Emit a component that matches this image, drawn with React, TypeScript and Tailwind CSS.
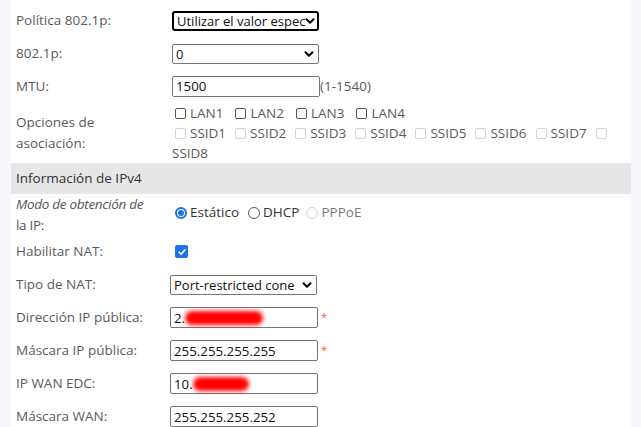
import React from 'react';

const FONT = { fontFamily: '"Open Sans", "Noto Sans", Arial, sans-serif' };

function Chevron() {
  return (
    <svg className="w-[10px] h-[10px] shrink-0 text-black" viewBox="0 0 10 10" fill="none" stroke="currentColor">
      <path d="M1.5 3.2 5 6.7 8.5 3.2" strokeWidth={2} strokeLinecap="round" strokeLinejoin="round" />
    </svg>
  );
}

function FakeSelect({ value, focused = false }: { value: string; focused?: boolean }) {
  return (
    <div
      className={`w-[147px] h-[20px] flex items-center justify-between bg-white pl-[3px] pr-[4px] text-[13px] text-[#111] ${
        focused ? 'border-2 border-black rounded-[3px]' : 'border border-[#767676] rounded-[2px]'
      }`}
    >
      <span className="whitespace-nowrap leading-[16px]">{value}</span>
      <Chevron />
    </div>
  );
}

function TextBox({ value, redact, required = false }: { value: string; redact?: string; required?: boolean }) {
  return (
    <div className="flex items-start">
      <div className="relative w-[148px] h-[21px] border border-[#767676] rounded-[2px] bg-white flex items-center pl-[3px] text-[13.3px] text-[#111]">
        <span className="leading-[16px]">{value}</span>
        {redact && <div className={`absolute top-[3px] h-[14px] bg-[#ff0000] rounded-full blur-[2px] ${redact}`} />}
      </div>
      {required && <span className="ml-[3px] text-[#f55] text-[11px] leading-none mt-[4px]">*</span>}
    </div>
  );
}

function Box({ disabled = false }: { disabled?: boolean }) {
  return (
    <span
      className={`inline-block w-[11px] h-[11px] rounded-[2px] border bg-white ${
        disabled ? 'border-[#d4d4d4]' : 'border-[#555]'
      }`}
    />
  );
}

function Row({ label, h = 'h-[33px]', children }: { label: React.ReactNode; h?: string; children: React.ReactNode }) {
  return (
    <div className={`flex items-center ${h}`}>
      <div className="w-[161px] pl-[5px] text-[13.5px] text-[#5a5a5a] leading-[21px]">{label}</div>
      <div className="flex-1">{children}</div>
    </div>
  );
}

export default function App() {
  const lans = ['LAN1', 'LAN2', 'LAN3', 'LAN4'];
  const ssids = ['SSID1', 'SSID2', 'SSID3', 'SSID4', 'SSID5', 'SSID6', 'SSID7'];

  return (
    <div className="flex w-[641px] h-[427px] overflow-hidden bg-white" style={FONT}>
      <div className="w-[11px] bg-[#f6f8fb]" />
      <div className="flex-1 pt-[4px]">
        <Row label="Política 802.1p:">
          <FakeSelect value="Utilizar el valor espec" focused />
        </Row>
        <Row label="802.1p:">
          <FakeSelect value="0" />
        </Row>
        <Row label="MTU:">
          <div className="flex items-center">
            <div className="w-[148px] h-[21px] border border-[#767676] rounded-[2px] flex items-center pl-[3px] text-[13.3px] text-[#111]">
              1500
            </div>
            <span className="text-[13.5px] text-[#5a5a5a]">(1-1540)</span>
          </div>
        </Row>
        <Row label={<>Opciones de<br />asociación:</>} h="h-[60px]">
          <div className="text-[13.5px] text-[#5a5a5a] leading-[20px]">
            <div className="flex items-center gap-[12px] pl-[3px]">
              {lans.map((l) => (
                <span key={l} className="flex items-center gap-[4px]">
                  <Box />
                  {l}
                </span>
              ))}
            </div>
            <div className="flex items-center gap-[9px] pl-[3px]">
              {ssids.map((s) => (
                <span key={s} className="flex items-center gap-[4px]">
                  <Box disabled />
                  {s}
                </span>
              ))}
              <Box disabled />
            </div>
            <div>SSID8</div>
          </div>
        </Row>

        <div className="h-[31px] bg-[#e6e6e6] flex items-center pl-[5px] text-[13.5px] text-[#333]">Información de IPv4</div>

        <Row label={<span className="italic text-[#555] tracking-[-0.3px]">Modo de obtención de<br /><span className="not-italic">la IP:</span></span>} h="h-[41px]">
          <div className="flex items-center text-[13.5px] text-[#333] pl-[3px] -mt-[4px]">
            <span className="w-[12px] h-[12px] rounded-full border-2 border-[#1a73e8] flex items-center justify-center">
              <span className="w-[6px] h-[6px] rounded-full bg-[#1a73e8]" />
            </span>
            <span className="ml-[3px]">Estático</span>
            <span className="ml-[9px] w-[12px] h-[12px] rounded-full border border-[#555]" />
            <span className="ml-[3px]">DHCP</span>
            <span className="ml-[7px] w-[12px] h-[12px] rounded-full border border-[#d0d0d0]" />
            <span className="ml-[3px] text-[#777]">PPPoE</span>
          </div>
        </Row>
        <Row label="Habilitar NAT:">
          <span className="ml-[3px] w-[13px] h-[13px] rounded-[2px] bg-[#1a73e8] flex items-center justify-center">
            <svg viewBox="0 0 12 12" className="w-[10px] h-[10px]" fill="none" stroke="white">
              <path d="M2.5 6.3 5 8.6 9.5 3.4" strokeWidth={2} strokeLinecap="round" strokeLinejoin="round" />
            </svg>
          </span>
        </Row>
        <Row label="Tipo de NAT:">
          <div className="-ml-[2px]">
            <FakeSelect value="Port-restricted cone" />
          </div>
        </Row>
        <Row label="Dirección IP pública:">
          <div className="-ml-[2px]">
            <TextBox value="2." redact="left-[14px] w-[78px]" required />
          </div>
        </Row>
        <Row label="Máscara IP pública:">
          <div className="-ml-[2px]">
            <TextBox value="255.255.255.255" required />
          </div>
        </Row>
        <Row label="IP WAN EDC:">
          <div className="-ml-[2px]">
            <TextBox value="10." redact="left-[22px] w-[56px]" />
          </div>
        </Row>
        <Row label="Máscara WAN:">
          <div className="-ml-[2px]">
            <TextBox value="255.255.255.252" />
          </div>
        </Row>
      </div>
      <div className="w-[10px] bg-[#f5f6f9]" />
    </div>
  );
}
